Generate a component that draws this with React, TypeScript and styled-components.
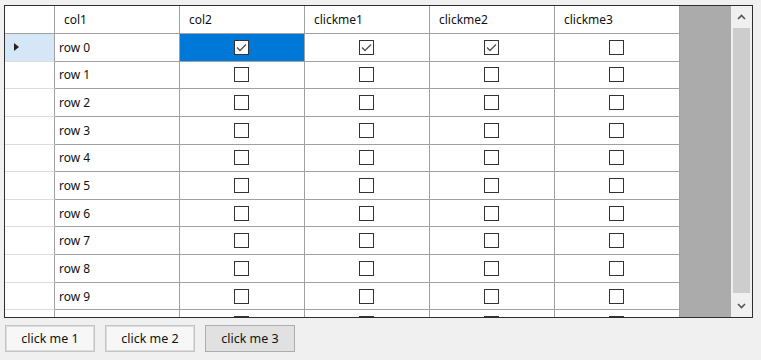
import React from "react";
import styled, { createGlobalStyle } from "styled-components";

const Global = createGlobalStyle`
  html, body { margin: 0; padding: 0; background: #f0f0f0; }
  body { font-family: "Noto Sans", "Open Sans", sans-serif; }
`;

const Page = styled.div`
  width: 761px;
  height: 360px;
  display: flex;
  flex-direction: column;
  padding: 5px 0 0 4px;
  box-sizing: border-box;
  gap: 7px;
`;

const Frame = styled.div`
  width: 749px;
  height: 313px;
  box-sizing: border-box;
  border: 1px solid #2e2e2e;
  box-shadow: inset 1px 1px 0 #8a8a8a;
  display: flex;
  overflow: hidden;
`;

const Body = styled.div`
  flex: 1;
  background: #ababab;
  overflow: hidden;
  display: flex;
  flex-direction: column;
`;

const Row = styled.div<{ $h: number }>`
  display: flex;
  flex: none;
  height: ${(p) => p.$h}px;
  width: 675px;
`;

const RowHead = styled.div<{ $selected?: boolean; $header?: boolean }>`
  width: 50px;
  box-sizing: border-box;
  background: ${(p) => (p.$selected ? "#d5e7f6" : "#ffffff")};
  border-right: 1px solid #a0a0a0;
  border-bottom: 1px solid ${(p) => (p.$header ? "#a0a0a0" : "#dcdcdc")};
  display: flex;
  align-items: center;
  padding-left: 9px;
`;

const Cell = styled.div<{ $selected?: boolean; $header?: boolean; $center?: boolean }>`
  width: 125px;
  box-sizing: border-box;
  background: ${(p) => (p.$selected ? "#0078d7" : "#ffffff")};
  border-right: 1px solid #a0a0a0;
  border-bottom: 1px solid #a0a0a0;
  display: flex;
  align-items: center;
  justify-content: ${(p) => (p.$center ? "center" : "flex-start")};
  padding-left: ${(p) => (p.$center ? "0" : p.$header ? "9px" : "4px")};
  font-size: 12px;
  color: #111;
  white-space: nowrap;
`;

const Box = styled.div`
  width: 15px;
  height: 15px;
  box-sizing: border-box;
  border: 1px solid #333;
  background: #fff;
  display: flex;
  align-items: center;
  justify-content: center;
  margin-left: -1px;
`;

const Arrow = styled.div`
  width: 0;
  height: 0;
  border-top: 4px solid transparent;
  border-bottom: 4px solid transparent;
  border-left: 5px solid #222;
`;

const Scroll = styled.div`
  width: 21px;
  background: #f0f0f0;
  display: flex;
  flex-direction: column;
  align-items: center;
`;

const ScrollBtn = styled.div`
  height: 22px;
  width: 100%;
  display: flex;
  align-items: center;
  justify-content: center;
  flex: none;
`;

const Track = styled.div`
  flex: 1;
  width: 100%;
  display: flex;
  justify-content: center;
  padding: 0 0 2px;
  box-sizing: border-box;
`;

const Thumb = styled.div`
  width: 17px;
  height: 100%;
  background: #cdcdcd;
`;

const Buttons = styled.div`
  display: flex;
  gap: 10px;
  padding-left: 1px;
`;

const Btn = styled.button<{ $focused?: boolean }>`
  width: 90px;
  height: 27px;
  box-sizing: border-box;
  font-family: "Noto Sans", "Open Sans", sans-serif;
  font-size: 12.5px;
  line-height: 16px;
  color: #111;
  background: ${(p) => (p.$focused ? "#e1e1e1" : "#f7f7f7")};
  border: 1px solid ${(p) => (p.$focused ? "#adadad" : "#c4c4c4")};
  box-shadow: ${(p) => (p.$focused ? "none" : "inset 0 0 0 1px #dedede")};
  padding: 0;
`;

const Check = ({ checked }: { checked: boolean }) => (
  <Box>
    {checked && (
      <svg width="13" height="13" viewBox="0 0 13 13">
        <polyline points="2,6.5 5,9.5 11,3.5" fill="none" stroke="#555" strokeWidth="1.4" />
      </svg>
    )}
  </Box>
);

const Chevron = ({ up }: { up?: boolean }) => (
  <svg width="9" height="6" viewBox="0 0 9 6">
    <polyline
      points={up ? "1,5 4.5,1.5 8,5" : "1,1 4.5,4.5 8,1"}
      fill="none"
      stroke="#555"
      strokeWidth="1.6"
    />
  </svg>
);

const cols = ["col1", "col2", "clickme1", "clickme2", "clickme3"];
const rows = Array.from({ length: 11 }, (_, i) => i);

export default function App() {
  return (
    <>
      <Global />
      <Page>
        <Frame>
          <Body>
            <Row $h={28}>
              <RowHead $header />
              {cols.map((c) => (
                <Cell key={c} $header>
                  {c}
                </Cell>
              ))}
            </Row>
            {rows.map((r) => (
              <Row key={r} $h={27.65}>
                <RowHead $selected={r === 0}>{r === 0 && <Arrow />}</RowHead>
                {/* the last row is scrolled mostly out of view; its label is not visible */}
                <Cell>{r < 10 ? `row ${r}` : ""}</Cell>
                <Cell $center $selected={r === 0}>
                  <Check checked={r === 0} />
                </Cell>
                <Cell $center>
                  <Check checked={r === 0} />
                </Cell>
                <Cell $center>
                  <Check checked={r === 0} />
                </Cell>
                <Cell $center>
                  <Check checked={false} />
                </Cell>
              </Row>
            ))}
          </Body>
          <Scroll>
            <ScrollBtn>
              <Chevron up />
            </ScrollBtn>
            <Track>
              <Thumb />
            </Track>
            <ScrollBtn>
              <Chevron />
            </ScrollBtn>
          </Scroll>
        </Frame>
        <Buttons>
          <Btn>click me 1</Btn>
          <Btn>click me 2</Btn>
          <Btn $focused>click me 3</Btn>
        </Buttons>
      </Page>
    </>
  );
}
